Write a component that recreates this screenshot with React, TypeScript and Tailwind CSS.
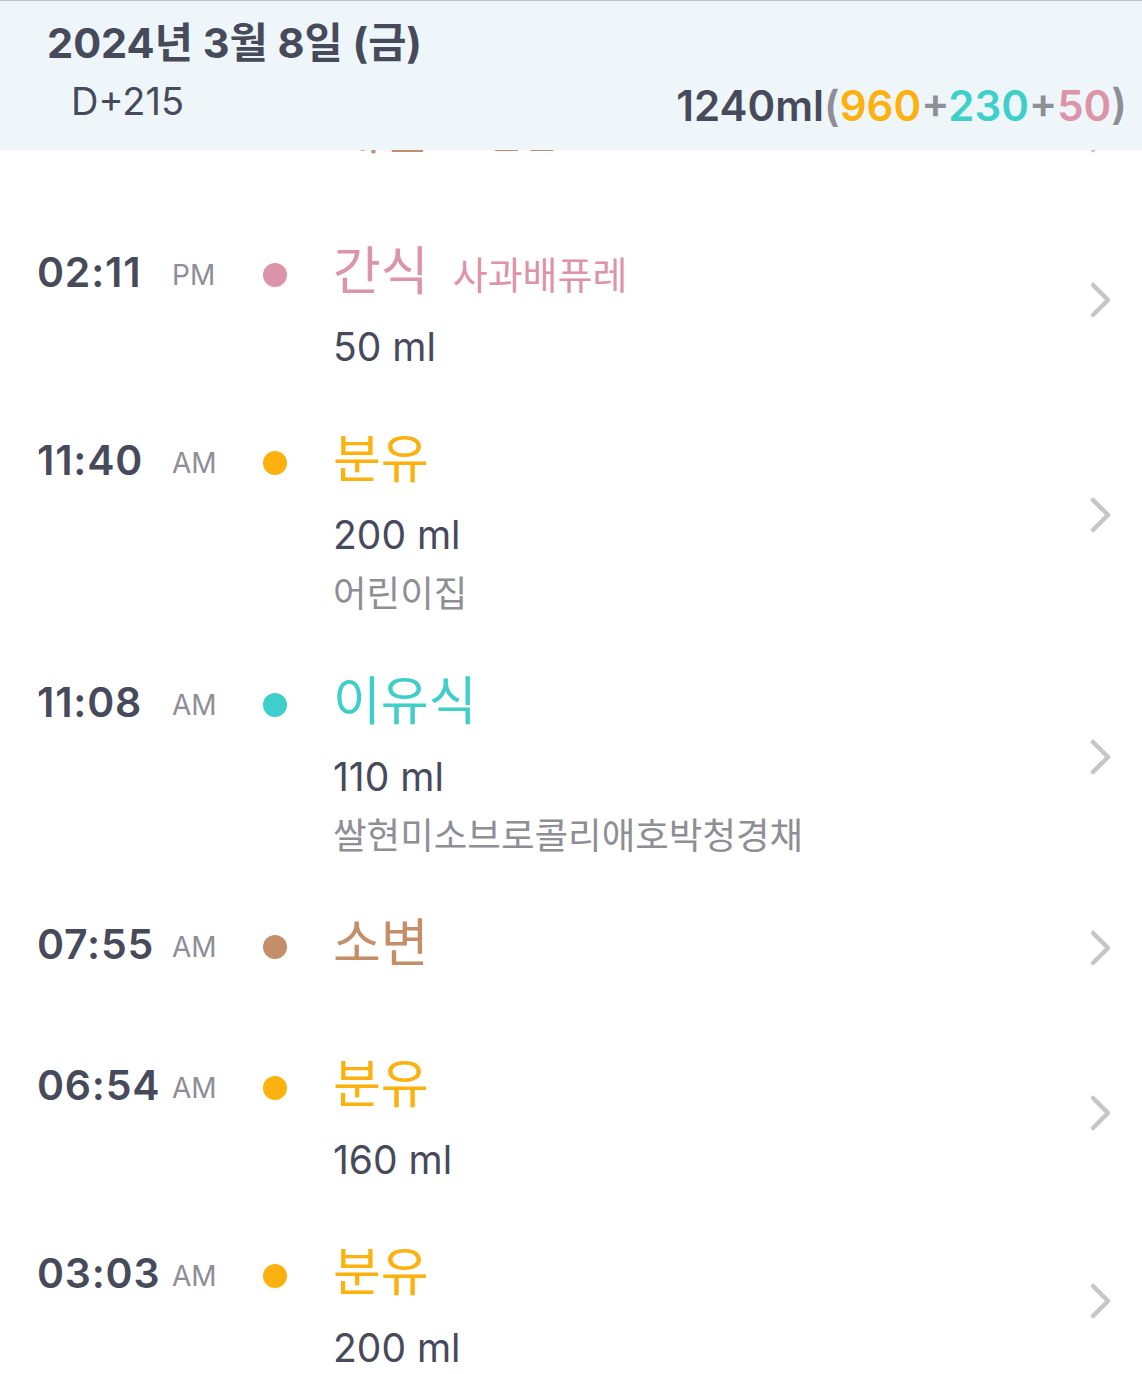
import React from "react";

type Entry = {
  time: string;
  ampm: string;
  title: string;
  color: string;
  sub?: string;
  amount?: string;
  note?: string;
};

const entries: Entry[] = [
  { time: "", ampm: "", title: "대변", color: "#C48E68", sub: "노란변" },
  { time: "02:11", ampm: "PM", title: "간식", color: "#DD93A8", sub: "사과배퓨레", amount: "50 ml" },
  { time: "11:40", ampm: "AM", title: "분유", color: "#FDB10F", amount: "200 ml", note: "어린이집" },
  { time: "11:08", ampm: "AM", title: "이유식", color: "#3ECFCB", amount: "110 ml", note: "쌀현미소브로콜리애호박청경채" },
  { time: "07:55", ampm: "AM", title: "소변", color: "#C48E68" },
  { time: "06:54", ampm: "AM", title: "분유", color: "#FDB10F", amount: "160 ml" },
  { time: "03:03", ampm: "AM", title: "분유", color: "#FDB10F", amount: "200 ml" },
];

const FONT = { fontFamily: 'Inter, "Noto Sans CJK KR", sans-serif' };

function Chevron() {
  return (
    <svg width="26" height="40" viewBox="0 0 26 40" fill="none" className="mt-[8px]">
      <path d="M5 5 L20 20 L5 35" stroke="#C6C6C9" strokeWidth="4.5" strokeLinecap="round" strokeLinejoin="round" />
    </svg>
  );
}

function Row({ e }: { e: Entry }) {
  return (
    <div className="flex pt-[25px] pb-[26px] pl-[37px] pr-[28px]">
      <div className="flex h-[90px] items-center">
        <span className="w-[135px] text-[41px] leading-none font-semibold text-[#474A5B] tracking-[0.8px]">{e.time}</span>
        <span className="mt-[6px] w-[91px] text-[28px] leading-none text-[#8E8E95]">{e.ampm}</span>
        <span className="mt-[6px] h-[24px] w-[24px] rounded-full" style={{ backgroundColor: e.color }} />
      </div>
      <div className="ml-[46px] flex flex-1 flex-col">
        <div className="flex h-[90px] items-center">
          <span className="text-[52px] leading-none" style={{ color: e.color }}>{e.title}</span>
          {e.sub && (
            <span className="ml-[24px] mt-[6px] text-[38px] leading-none" style={{ color: e.color }}>{e.sub}</span>
          )}
        </div>
        {e.amount && (
          <div className="mt-[13px] h-[34px] text-[39px] leading-[34px] text-[#474A5B]">{e.amount}</div>
        )}
        {e.note && (
          <div className="mt-[30px] h-[24px] text-[36.5px] leading-[24px] text-[#8E8E95]">{e.note}</div>
        )}
      </div>
      <div className="flex items-center">
        <Chevron />
      </div>
    </div>
  );
}

export default function App() {
  return (
    <div className="relative h-[1374px] w-full overflow-hidden bg-white" style={FONT}>
      <div className="pt-[61px]">
        {entries.map((e, i) => (
          <Row key={i} e={e} />
        ))}
      </div>
      <div className="absolute inset-x-0 top-0 h-[150px] border-t border-[#B9C3C9] bg-[#EEF6FA]">
        <div className="pl-[47px] pt-[17px] text-[41.5px] leading-[50px] font-bold text-[#474A5B]">
          2024년 3월 8일 (금)
        </div>
        <div className="flex items-start justify-between pr-[15px]">
          <div className="pl-[71px] pt-[13px] text-[38px] leading-[40px] text-[#474A5B]">D+215</div>
          <div className="pt-[18px] text-[42px] leading-[40px] font-semibold text-[#474A5B]">
            1240ml
            <span className="text-[#8E8E96]">(</span>
            <span className="text-[#FDB10F]">960</span>
            <span className="text-[#8E8E96]">+</span>
            <span className="text-[#3ECFCB]">230</span>
            <span className="text-[#8E8E96]">+</span>
            <span className="text-[#DD93A8]">50</span>
            <span className="text-[#8E8E96]">)</span>
          </div>
        </div>
      </div>
    </div>
  );
}
